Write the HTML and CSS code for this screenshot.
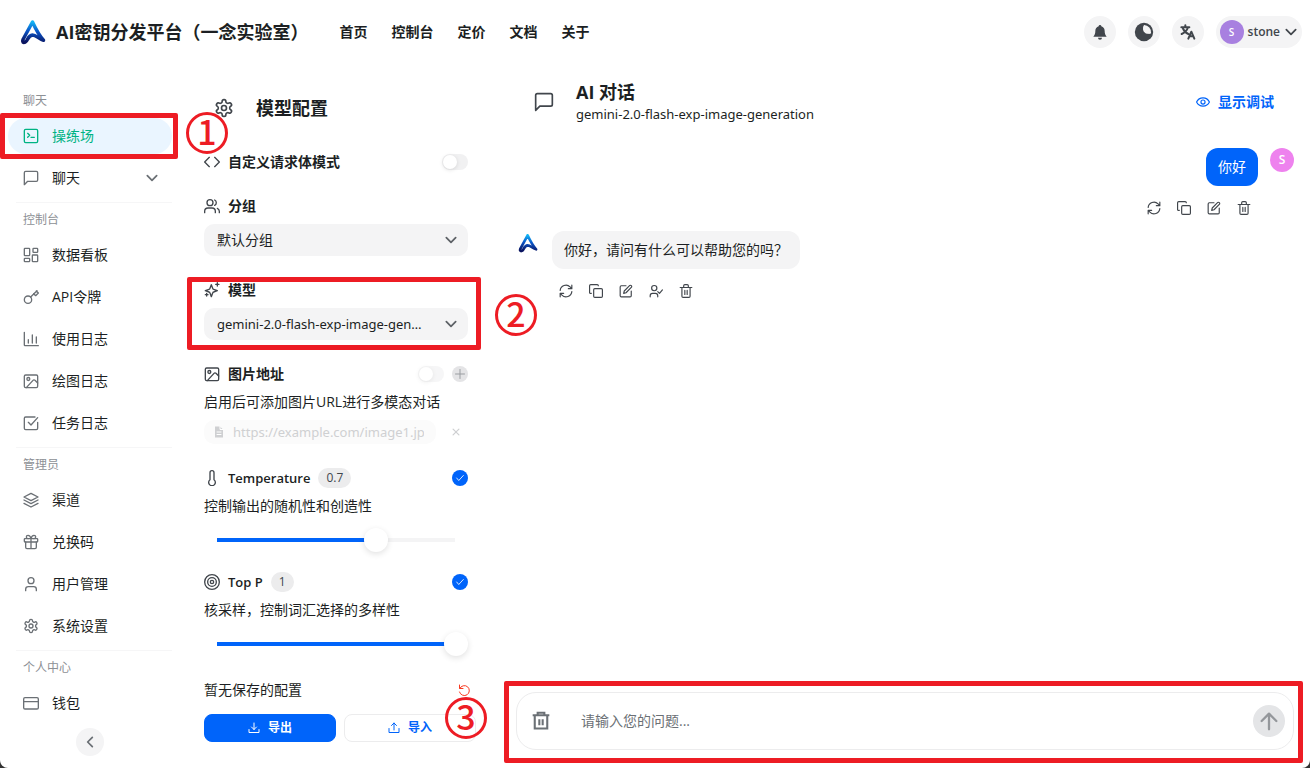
FILE: index.html
```html
<!DOCTYPE html>
<html lang="zh-CN">
  <head>
    <meta charset="UTF-8" />
    <meta name="viewport" content="width=device-width, initial-scale=1.0" />
    <title>AI密钥分发平台（一念实验室）</title>
    <link rel="stylesheet" href="styles.css">
  </head>
  <body>
    <svg class="sprite" aria-hidden="true">
      <defs>
        <linearGradient id="logo-fill" x1="0.5" y1="0" x2="0.4" y2="1">
          <stop offset="0" stop-color="#12b4f5" />
          <stop offset="0.45" stop-color="#0a55c8" />
          <stop offset="1" stop-color="#0a1460" />
        </linearGradient>
      </defs>
      <symbol id="logo" viewBox="0 0 26 26">
        <path d="M12.500 3 3 20.500c-1 2.300.2 3.500 2.200 2.700C8 22 7.500 16.500 12.500 16c4 0 5.500 3.800 11 5.200C20 17.500 15.500 9.500 12.500 3z" fill="none" stroke="url(#logo-fill)" stroke-width="3.500" stroke-linejoin="round" />
      </symbol>
      <symbol id="bell" viewBox="0 0 24 24">
        <path d="M12 1.500a2 2 0 0 0-2 2C6.800 4.300 5 7 5 10.500c0 4-1 6-3 8.500h20c-2-2.500-3-4.500-3-8.500 0-3.500-1.800-6.200-5-7a2 2 0 0 0-2-2zM9 20.500a3 3 0 0 0 6 0z" fill="currentColor" stroke="none" />
      </symbol>
      <symbol id="moon" viewBox="0 0 24 24">
        <circle cx="12" cy="12" r="11" fill="currentColor" stroke="none" />
        <path d="M12.500 4C9 8 12.500 15 20 13.500 18.500 9 16 10 12.500 4z" fill="#f4f4f5" stroke="none" />
        <path d="M12 3.500C8.500 10.500 13.500 16 20.500 13.500A9 9 0 0 0 12 3.500z" fill="#f4f4f5" stroke="none" />
      </symbol>
      <symbol id="lang" viewBox="0 0 24 24">
        <path d="M2 5h12M8 2v3M12 5c-1.500 5-5 8-9.500 10M4.500 7c1.500 3.500 4 6.500 8 8M12.500 22l4.500-10.500L21.500 22M14 18.500h6" stroke-width="3" />
      </symbol>
      <symbol id="chevron" viewBox="0 0 24 24"><path d="m4 8 8 8 8-8" stroke-width="3" /></symbol>
      <symbol id="terminal" viewBox="0 0 24 24"><rect x="2" y="2" width="20" height="20" rx="2" /><path d="m7 8 3 3-3 3M12 14h5" /></symbol>
      <symbol id="message" viewBox="0 0 24 24"><path d="M22 15a2 2 0 0 1-2 2H7l-5 5V4a2 2 0 0 1 2-2h16a2 2 0 0 1 2 2z" /></symbol>
      <symbol id="dashboard" viewBox="0 0 24 24"><rect x="2" y="2" width="8" height="11" rx="1" /><rect x="15" y="2" width="7" height="6" rx="1" /><rect x="14" y="12" width="8" height="10" rx="1" /><rect x="2" y="17" width="8" height="5" rx="1" /></symbol>
      <symbol id="key" viewBox="0 0 24 24"><circle cx="7.500" cy="16" r="5.500" /><path d="M11.500 12 21 2.500M16 7l3 3 4-4-3-3" /></symbol>
      <symbol id="chart" viewBox="0 0 24 24"><path d="M2 2v19a1 1 0 0 0 1 1h20M8 18v-5M14 18V6M20 18V9" /></symbol>
      <symbol id="image" viewBox="0 0 24 24"><rect x="2" y="3" width="20" height="19" rx="2" /><circle cx="8" cy="9" r="2.200" /><path d="m22 15-4-4a2 2 0 0 0-3 0L5 22" /></symbol>
      <symbol id="check-square" viewBox="0 0 24 24"><path d="M22 11v9a2 2 0 0 1-2 2H4a2 2 0 0 1-2-2V5a2 2 0 0 1 2-2h14M8 11l4 4L22 4" /></symbol>
      <symbol id="layers" viewBox="0 0 24 24"><path d="M12 2 1.500 7.500 12 13l10.500-5.500zM1.500 12 12 17.500 22.500 12M1.500 17 12 22.500 22.500 17" /></symbol>
      <symbol id="gift" viewBox="0 0 24 24"><rect x="2" y="7" width="20" height="5" rx="1" /><path d="M12 7v15M20 12v8a2 2 0 0 1-2 2H6a2 2 0 0 1-2-2v-8M7.500 7a2.500 2.500 0 0 1 0-5C11 2 12 7 12 7s1-5 4.500-5a2.500 2.500 0 0 1 0 5" /></symbol>
      <symbol id="user" viewBox="0 0 24 24"><circle cx="12" cy="7" r="4.500" /><path d="M20 22v-2a4 4 0 0 0-4-4H8a4 4 0 0 0-4 4v2" /></symbol>
      <symbol id="users" viewBox="0 0 24 24"><circle cx="9" cy="7" r="4.500" /><path d="M17 22v-2a5 5 0 0 0-5-5H6a5 5 0 0 0-5 5v2M16 3a4.500 4.500 0 0 1 0 8M23 22v-2a5 5 0 0 0-3-4.500" /></symbol>
      <symbol id="user-check" viewBox="0 0 24 24"><circle cx="9" cy="7" r="4.500" /><path d="M15 22v-2a4 4 0 0 0-4-4H6a4 4 0 0 0-4 4v2M15 13l3 3 5-6" /></symbol>
      <symbol id="gear" viewBox="0 0 24 24"><path d="M12.220 2h-.44a2 2 0 0 0-2 2v.18a2 2 0 0 1-1 1.730l-.43.25a2 2 0 0 1-2 0l-.15-.08a2 2 0 0 0-2.730.73l-.22.38a2 2 0 0 0 .73 2.730l.15.1a2 2 0 0 1 1 1.720v.51a2 2 0 0 1-1 1.740l-.15.09a2 2 0 0 0-.73 2.730l.22.38a2 2 0 0 0 2.730.73l.15-.08a2 2 0 0 1 2 0l.43.25a2 2 0 0 1 1 1.730V20a2 2 0 0 0 2 2h.44a2 2 0 0 0 2-2v-.18a2 2 0 0 1 1-1.730l.43-.25a2 2 0 0 1 2 0l.15.08a2 2 0 0 0 2.730-.73l.22-.39a2 2 0 0 0-.73-2.730l-.15-.08a2 2 0 0 1-1-1.740v-.5a2 2 0 0 1 1-1.740l.15-.09a2 2 0 0 0 .73-2.730l-.22-.38a2 2 0 0 0-2.730-.73l-.15.08a2 2 0 0 1-2 0l-.43-.25a2 2 0 0 1-1-1.730V4a2 2 0 0 0-2-2z" /><circle cx="12" cy="12" r="3" /></symbol>
      <symbol id="card" viewBox="0 0 24 24"><rect x="1" y="4" width="22" height="17" rx="2" /><path d="M1 10h22" /></symbol>
      <symbol id="code" viewBox="0 0 24 24"><path d="m16 19 7-7-7-7M8 5l-7 7 7 7" /></symbol>
      <symbol id="sparkles" viewBox="0 0 24 24"><path d="m11 4-2 5.500a2 2 0 0 1-1.500 1.500L2 13l5.500 2A2 2 0 0 1 9 16.500L11 22l2-5.500a2 2 0 0 1 1.500-1.500l5.500-2-5.500-2A2 2 0 0 1 13 9.500zM20 1v5M22.500 3.500h-5M4 17v4M6 19H2" /></symbol>
      <symbol id="thermometer" viewBox="0 0 24 24"><path d="M15 14.500V4a3 3 0 0 0-6 0v10.500a5 5 0 1 0 6 0z" /></symbol>
      <symbol id="target" viewBox="0 0 24 24"><circle cx="12" cy="12" r="11" /><circle cx="12" cy="12" r="6.500" /><circle cx="12" cy="12" r="2.500" /></symbol>
      <symbol id="file" viewBox="0 0 24 24"><path d="M4 1h10l6 6v16H4z" fill="currentColor" stroke="none" /><path d="M14 1v6h6M8 12h8M8 17h8" stroke="#fff" /></symbol>
      <symbol id="plus" viewBox="0 0 24 24"><path d="M12 3v18M3 12h18" /></symbol>
      <symbol id="close" viewBox="0 0 24 24"><path d="m5 5 14 14M19 5 5 19" stroke-width="3" /></symbol>
      <symbol id="check" viewBox="0 0 24 24"><path d="m4 12 5 6L20 6" /></symbol>
      <symbol id="undo" viewBox="0 0 24 24"><path d="M3 2v7h7M3.500 9A10 10 0 1 1 3 16" /></symbol>
      <symbol id="download" viewBox="0 0 24 24"><path d="M12 2v13M7 10l5 5 5-5M2 15v6h20v-6" /></symbol>
      <symbol id="upload" viewBox="0 0 24 24"><path d="M12 16V2M7 7l5-5 5 5M2 13v8h20v-8" /></symbol>
      <symbol id="eye" viewBox="0 0 24 24"><path d="M1 12c4.500-9.500 17.500-9.500 22 0-4.500 9.500-17.500 9.500-22 0z" /><circle cx="12" cy="12" r="3.500" /></symbol>
      <symbol id="refresh" viewBox="0 0 24 24"><path d="M2 11A10 10 0 0 1 19 5l3 3M22 2v6h-6M22 13A10 10 0 0 1 5 19l-3-3M8 16H2v6" /></symbol>
      <symbol id="copy" viewBox="0 0 24 24"><rect x="8" y="8" width="15" height="15" rx="2" /><path d="M4 16a2 2 0 0 1-3-2V3a2 2 0 0 1 2-2h11a2 2 0 0 1 2 2" /></symbol>
      <symbol id="edit" viewBox="0 0 24 24"><path d="M12 3H4a2 2 0 0 0-2 2v15a2 2 0 0 0 2 2h15a2 2 0 0 0 2-2v-8M18.500 2.500a2.200 2.200 0 0 1 3 3L12 15l-4 1 1-4z" /></symbol>
      <symbol id="trash" viewBox="0 0 24 24"><path d="M2 6h20M19 6v15a2 2 0 0 1-2 2H7a2 2 0 0 1-2-2V6M8 6V3a2 2 0 0 1 2-2h4a2 2 0 0 1 2 2v3M10 11v7M14 11v7" /></symbol>
      <symbol id="trash-bold" viewBox="0 0 24 24"><path d="M2 5h20M4.500 5v16h15V5M8 5V2h8v3M10 10v7M14 10v7" stroke-width="2.500" stroke-linecap="butt" stroke-linejoin="miter" /></symbol>
      <symbol id="arrow-up" viewBox="0 0 24 24"><path d="M12 21V4M4 12l8-8 8 8" stroke-width="2.500" /></symbol>
    </svg>

    <div class="app">
      <header class="topbar">
        <a class="brand" href="#">
          <svg class="icon icon-logo"><use href="#logo" /></svg>
          <span>AI密钥分发平台（一念实验室）</span>
        </a>
        <nav class="topnav">
          <a href="#">首页</a>
          <a href="#">控制台</a>
          <a href="#">定价</a>
          <a href="#">文档</a>
          <a href="#">关于</a>
        </nav>
        <div class="tools">
          <button class="round" aria-label="通知"><svg class="icon"><use href="#bell" /></svg></button>
          <button class="round" aria-label="主题"><svg class="icon icon-lg"><use href="#moon" /></svg></button>
          <button class="round" aria-label="语言"><svg class="icon"><use href="#lang" /></svg></button>
          <button class="account">
            <span class="avatar avatar-purple">S</span>
            <span>stone</span>
            <svg class="icon icon-sm"><use href="#chevron" /></svg>
          </button>
        </div>
      </header>

      <div class="columns">
        <aside class="sidebar">
          <section class="group">
            <h2>聊天</h2>
            <div class="marked">
              <a class="item active" href="#"><svg class="icon"><use href="#terminal" /></svg><span>操练场</span></a>
              <div class="mark mark-nav"></div>
              <div class="step step-nav">1</div>
            </div>
            <a class="item" href="#"><svg class="icon"><use href="#message" /></svg><span>聊天</span><svg class="icon icon-sm push"><use href="#chevron" /></svg></a>
          </section>
          <section class="group">
            <h2>控制台</h2>
            <a class="item" href="#"><svg class="icon"><use href="#dashboard" /></svg><span>数据看板</span></a>
            <a class="item" href="#"><svg class="icon"><use href="#key" /></svg><span>API令牌</span></a>
            <a class="item" href="#"><svg class="icon"><use href="#chart" /></svg><span>使用日志</span></a>
            <a class="item" href="#"><svg class="icon"><use href="#image" /></svg><span>绘图日志</span></a>
            <a class="item" href="#"><svg class="icon"><use href="#check-square" /></svg><span>任务日志</span></a>
          </section>
          <section class="group">
            <h2>管理员</h2>
            <a class="item" href="#"><svg class="icon"><use href="#layers" /></svg><span>渠道</span></a>
            <a class="item" href="#"><svg class="icon"><use href="#gift" /></svg><span>兑换码</span></a>
            <a class="item" href="#"><svg class="icon"><use href="#user" /></svg><span>用户管理</span></a>
            <a class="item" href="#"><svg class="icon"><use href="#gear" /></svg><span>系统设置</span></a>
          </section>
          <section class="group">
            <h2>个人中心</h2>
            <a class="item" href="#"><svg class="icon"><use href="#card" /></svg><span>钱包</span></a>
          </section>
          <button class="collapse" aria-label="收起侧边栏"><svg class="icon icon-sm"><use href="#chevron" /></svg></button>
        </aside>

        <section class="config">
          <div class="config-title">
            <span class="slot"><svg class="icon icon-lg"><use href="#gear" /></svg></span>
            <h1>模型配置</h1>
          </div>

          <div class="field">
            <div class="label">
              <svg class="icon"><use href="#code" /></svg>
              <label for="custom-body">自定义请求体模式</label>
              <input class="switch push" type="checkbox" id="custom-body" />
            </div>
          </div>

          <div class="field">
            <div class="label">
              <svg class="icon"><use href="#users" /></svg>
              <label for="group">分组</label>
            </div>
            <div class="select">
              <select id="group"><option>默认分组</option></select>
              <svg class="icon icon-sm"><use href="#chevron" /></svg>
            </div>
          </div>

          <div class="field marked">
            <div class="label">
              <svg class="icon"><use href="#sparkles" /></svg>
              <label for="model">模型</label>
            </div>
            <div class="select">
              <select class="latin" id="model"><option>gemini-2.0-flash-exp-image-generation</option></select>
              <svg class="icon icon-sm"><use href="#chevron" /></svg>
            </div>
            <div class="mark mark-model"></div>
            <div class="step step-model">2</div>
          </div>

          <div class="field">
            <div class="label">
              <svg class="icon"><use href="#image" /></svg>
              <label for="use-image">图片地址</label>
              <input class="switch faded push" type="checkbox" id="use-image" />
              <button class="add" aria-label="添加图片"><svg class="icon icon-xs"><use href="#plus" /></svg></button>
            </div>
            <p>启用后可添加图片URL进行多模态对话</p>
            <div class="url-row">
              <div class="url">
                <svg class="icon icon-xs"><use href="#file" /></svg>
                <input class="latin" type="text" aria-label="图片地址" placeholder="https://example.com/image1.jpg" disabled />
              </div>
              <button class="remove" aria-label="删除图片"><svg class="icon icon-xxs"><use href="#close" /></svg></button>
            </div>
          </div>

          <div class="field">
            <div class="label">
              <svg class="icon"><use href="#thermometer" /></svg>
              <label class="label-latin" for="temperature">Temperature</label>
              <span class="tag">0.7</span>
              <button class="on push" aria-label="启用 Temperature"><svg class="icon icon-xxs"><use href="#check" /></svg></button>
            </div>
            <p>控制输出的随机性和创造性</p>
            <input class="slider" type="range" id="temperature" min="0.1" max="1" step="0.1" value="0.7" style="--fill: 0.667" />
          </div>

          <div class="field">
            <div class="label">
              <svg class="icon"><use href="#target" /></svg>
              <label class="label-latin" for="top-p">Top P</label>
              <span class="tag">1</span>
              <button class="on push" aria-label="启用 Top P"><svg class="icon icon-xxs"><use href="#check" /></svg></button>
            </div>
            <p>核采样，控制词汇选择的多样性</p>
            <input class="slider" type="range" id="top-p" min="0.1" max="1" step="0.1" value="1" style="--fill: 1" />
          </div>

          <div class="saved">
            <div class="saved-row">
              <p>暂无保存的配置</p>
              <button class="reset" aria-label="重置"><svg class="icon icon-xs"><use href="#undo" /></svg></button>
            </div>
            <div class="buttons">
              <button class="btn btn-primary"><svg class="icon icon-xs"><use href="#download" /></svg><span>导出</span></button>
              <button class="btn"><svg class="icon icon-xs"><use href="#upload" /></svg><span>导入</span></button>
            </div>
          </div>
        </section>

        <main class="chat">
          <div class="chat-head">
            <span class="slot"><svg class="icon icon-lg"><use href="#message" /></svg></span>
            <div>
              <h1>AI 对话</h1>
              <div class="latin">gemini-2.0-flash-exp-image-generation</div>
            </div>
            <button class="debug push"><svg class="icon icon-sm"><use href="#eye" /></svg><span>显示调试</span></button>
          </div>

          <div class="messages">
            <div class="message mine">
              <span class="avatar avatar-pink">S</span>
              <div class="body">
                <div class="bubble">你好</div>
                <div class="actions">
                  <button aria-label="重试"><svg class="icon icon-sm"><use href="#refresh" /></svg></button>
                  <button aria-label="复制"><svg class="icon icon-sm"><use href="#copy" /></svg></button>
                  <button aria-label="编辑"><svg class="icon icon-sm"><use href="#edit" /></svg></button>
                  <button aria-label="删除"><svg class="icon icon-sm"><use href="#trash" /></svg></button>
                </div>
              </div>
            </div>
            <div class="message">
              <span class="avatar"><svg class="icon icon-lg"><use href="#logo" /></svg></span>
              <div class="body">
                <div class="bubble">你好，请问有什么可以帮助您的吗？</div>
                <div class="actions">
                  <button aria-label="重试"><svg class="icon icon-sm"><use href="#refresh" /></svg></button>
                  <button aria-label="复制"><svg class="icon icon-sm"><use href="#copy" /></svg></button>
                  <button aria-label="编辑"><svg class="icon icon-sm"><use href="#edit" /></svg></button>
                  <button aria-label="切换角色"><svg class="icon icon-sm"><use href="#user-check" /></svg></button>
                  <button aria-label="删除"><svg class="icon icon-sm"><use href="#trash" /></svg></button>
                </div>
              </div>
            </div>
          </div>

          <form class="composer marked">
            <button class="clear" type="button" aria-label="清空"><svg class="icon icon-lg"><use href="#trash-bold" /></svg></button>
            <input type="text" aria-label="问题" placeholder="请输入您的问题..." />
            <button class="send" type="button" aria-label="发送"><svg class="icon icon-xl"><use href="#arrow-up" /></svg></button>
            <div class="mark mark-composer"></div>
            <div class="step step-composer">3</div>
          </form>
        </main>
      </div>
    </div>
  </body>
</html>
```

FILE: styles.css
```css
* {
  box-sizing: border-box;
  margin: 0;
  padding: 0;
}
html {
  background-color: #333;
}
body {
  font-family: "Open Sans", "Noto Sans CJK SC", sans-serif;
  font-size: 14px;
  line-height: 20px;
  color: #1c1f23;
}
a {
  color: inherit;
  text-decoration: none;
}
button,
input,
select {
  font: inherit;
  color: inherit;
  border: none;
  background: none;
}
button {
  display: flex;
  align-items: center;
  justify-content: center;
  cursor: pointer;
}
h1 {
  font-size: 18px;
  line-height: 24px;
  font-weight: 700;
}
.sprite {
  position: absolute;
  width: 0;
  height: 0;
}
.latin {
  font-family: "Noto Sans", sans-serif;
  font-size: 13px;
}
.label-latin {
  font-size: 13px;
}
.push {
  margin-left: auto;
}

/* icons */
.icon {
  display: block;
  flex: none;
  width: 16px;
  height: 16px;
  fill: none;
  stroke: currentColor;
  stroke-width: 2;
  stroke-linecap: round;
  stroke-linejoin: round;
}
.icon-xxs {
  width: 10px;
  height: 10px;
}
.icon-xs {
  width: 12px;
  height: 12px;
}
.icon-sm {
  width: 14px;
  height: 14px;
}
.icon-lg {
  width: 20px;
  height: 20px;
}
.icon-xl {
  width: 22px;
  height: 22px;
}
.icon-logo {
  width: 26px;
  height: 26px;
}

.app {
  display: flex;
  flex-direction: column;
  height: 100vh;
  overflow: hidden;
  background-color: white;
  border-radius: 0 0 8px 8px;
}

/* header */
.topbar {
  display: flex;
  align-items: center;
  height: 64px;
  padding: 0 8px 0 20px;
}
.brand {
  display: flex;
  align-items: center;
  gap: 10px;
  font-size: 18px;
  font-weight: 700;
}
.topnav {
  display: flex;
  gap: 24px;
  margin-left: 31px;
  font-weight: 600;
}
.tools {
  display: flex;
  gap: 12px;
  margin-left: auto;
  color: #41464c;
}
.round {
  width: 32px;
  height: 32px;
  border-radius: 50%;
  background-color: #f4f4f5;
}
.account {
  gap: 4px;
  height: 32px;
  padding: 0 4px;
  border-radius: 16px;
  background-color: #f4f4f5;
  font-size: 12px;
  font-weight: 600;
}
.avatar {
  display: flex;
  flex: none;
  align-items: center;
  justify-content: center;
  width: 24px;
  height: 24px;
  border-radius: 50%;
  font-size: 12px;
  font-weight: 600;
  color: white;
}
.avatar-purple {
  background-color: #a880e0;
  font-size: 10px;
}
.avatar-pink {
  background-color: #ee82ee;
}

.columns {
  display: flex;
  flex: 1;
  min-height: 0;
}

/* sidebar */
.sidebar {
  position: relative;
  width: 180px;
  padding: 28px 8px 0;
}
.group + .group::before {
  content: "";
  display: block;
  height: 1px;
  margin: 0 0 8px 8px;
  background-color: #f6f6f7;
}
.group h2 {
  padding-left: 15px;
  margin-bottom: 8px;
  font-size: 12px;
  line-height: 18px;
  font-weight: 400;
  color: #8d9095;
}
.item {
  display: flex;
  align-items: center;
  gap: 13px;
  height: 36px;
  margin-bottom: 6px;
  padding: 0 13px 0 15px;
  border-radius: 18px;
}
.item .icon {
  color: #6b7075;
}
.item.active {
  background-color: #eaf5ff;
  color: #00b383;
}
.item.active .icon {
  color: #00b383;
}
.collapse {
  position: absolute;
  left: 76px;
  bottom: 12px;
  width: 28px;
  height: 28px;
  border-radius: 50%;
  background-color: #f4f4f5;
  color: #6b7075;
}
.collapse .icon {
  transform: rotate(90deg);
}

/* model config */
.config {
  display: flex;
  flex-direction: column;
  gap: 24px;
  width: 312px;
  padding: 24px 24px 0;
}
.config-title {
  display: flex;
  align-items: center;
  gap: 12px;
  height: 40px;
}
.slot {
  display: flex;
  justify-content: center;
  width: 40px;
  color: #41464c;
}
.field {
  display: flex;
  flex-direction: column;
  gap: 8px;
}
.label {
  display: flex;
  align-items: center;
  gap: 8px;
  height: 20px;
  font-weight: 600;
}
.label > .icon {
  color: #41464c;
}
.switch {
  display: flex;
  align-items: center;
  appearance: none;
  width: 26px;
  height: 16px;
  padding: 0 1px;
  border-radius: 8px;
  background-color: #f1f1f2;
}
.switch::before {
  content: "";
  width: 14px;
  height: 14px;
  border-radius: 50%;
  background-color: white;
  box-shadow: 0 1px 4px rgba(0, 0, 0, 0.12);
}
.switch.faded {
  opacity: 0.6;
}
.select {
  position: relative;
}
.select select {
  display: block;
  appearance: none;
  width: 100%;
  height: 32px;
  padding: 0 42px 0 13px;
  border-radius: 10px;
  background-color: #f4f4f5;
  text-overflow: ellipsis;
  overflow: hidden;
  white-space: nowrap;
}
.select .icon {
  position: absolute;
  top: 9px;
  right: 10px;
  color: #5d6166;
  pointer-events: none;
}
.add,
.on {
  width: 16px;
  height: 16px;
  border-radius: 50%;
}
.add {
  background-color: #e4e4e6;
  color: #9a9da1;
}
.on {
  background-color: #0064fa;
  color: white;
}
.url-row {
  display: flex;
  align-items: center;
  gap: 8px;
  color: #cfd0d2;
}
.url {
  display: flex;
  flex: 1;
  align-items: center;
  gap: 8px;
  height: 24px;
  min-width: 0;
  padding: 0 12px 0 9px;
  border-radius: 10px;
  background-color: #fbfbfb;
}
.url input {
  flex: 1;
  min-width: 0;
}
.url input::placeholder {
  color: #cfd0d2;
}
.remove {
  width: 24px;
  height: 24px;
}
.tag {
  padding: 0 8px;
  border-radius: 10px;
  background-color: #ececed;
  color: #41464c;
  font-size: 12px;
  font-weight: 400;
}
.slider {
  appearance: none;
  width: 100%;
  height: 24px;
  margin: 4px 0 -4px;
  background-image: linear-gradient(#0064fa, #0064fa), linear-gradient(#f4f4f5, #f4f4f5);
  background-position: 13px center;
  background-repeat: no-repeat;
  background-size: calc((100% - 26px) * var(--fill)) 4px, calc(100% - 26px) 4px;
}
.slider::-webkit-slider-thumb {
  appearance: none;
  width: 24px;
  height: 24px;
  border-radius: 50%;
  background-color: white;
  box-shadow: 0 2px 6px rgba(0, 0, 0, 0.12);
}
.saved {
  display: flex;
  flex-direction: column;
  gap: 14px;
  margin: 4px -8px 0 0;
}
.saved-row {
  display: flex;
  align-items: center;
  justify-content: space-between;
  padding-right: 6px;
}
.reset {
  width: 12px;
  height: 20px;
  color: #f93920;
}
.buttons {
  display: grid;
  grid-template-columns: 1fr 1fr;
  gap: 8px;
}
.btn {
  gap: 8px;
  height: 28px;
  border: 1px solid #ececed;
  border-radius: 8px;
  font-size: 12px;
  font-weight: 600;
  color: #0064fa;
}
.btn-primary {
  border-color: #0064fa;
  background-color: #0064fa;
  color: white;
}

/* chat */
.chat {
  display: flex;
  flex: 1;
  flex-direction: column;
  min-width: 0;
  padding: 16px 16px 18px 24px;
}
.chat-head {
  display: flex;
  align-items: center;
  gap: 12px;
  height: 44px;
  padding: 0 20px 0 8px;
}
.debug {
  gap: 8px;
  font-weight: 600;
  color: #0064fa;
}
.messages {
  display: flex;
  flex: 1;
  flex-direction: column;
  gap: 16px;
  padding-top: 24px;
}
.message {
  display: flex;
  gap: 12px;
}
.mine {
  flex-direction: row-reverse;
}
.body {
  display: flex;
  flex-direction: column;
  align-items: flex-start;
  gap: 15px;
}
.mine .body {
  align-items: flex-end;
}
.bubble {
  padding: 9px 12px;
  border-radius: 12px;
  background-color: #f4f4f5;
}
.mine .bubble {
  background-color: #0064fa;
  color: white;
}
.actions {
  display: flex;
  gap: 16px;
  padding: 0 7px;
  color: #41464c;
}
.composer {
  display: flex;
  align-items: center;
  height: 58px;
  padding: 0 8px 0 14px;
  border: 1px solid #ececed;
  border-radius: 20px;
}
.composer input {
  flex: 1;
  margin-left: 30px;
  outline: none;
}
.composer input::placeholder {
  color: #6b7075;
}
.clear {
  color: #6b7075;
}
.send {
  width: 32px;
  height: 32px;
  border-radius: 50%;
  background-color: #e4e5e7;
  color: #94979b;
}

/* red step markers drawn over the page */
.marked {
  position: relative;
}
.mark {
  position: absolute;
  z-index: 1;
  border: 5px solid #ed1c24;
  border-radius: 2px;
  pointer-events: none;
}
.mark-nav {
  inset: -5px -6px -5px -8px;
}
.mark-model {
  inset: -3px -13px -10px -17px;
}
.mark-composer {
  inset: -12px -10px -14px -13px;
}
.step {
  position: absolute;
  z-index: 2;
  display: flex;
  align-items: center;
  justify-content: center;
  width: 42px;
  height: 42px;
  padding-bottom: 4px;
  border: 3px solid #ed1c24;
  border-radius: 50%;
  color: #ed1c24;
  font-family: "Noto Sans CJK SC", sans-serif;
  font-size: 34px;
  font-weight: 500;
  line-height: 34px;
}
.step-nav {
  top: -6px;
  right: -56px;
}
.step-model {
  top: 14px;
  right: -69px;
}
.step-composer {
  top: 4px;
  left: -72px;
}
```
